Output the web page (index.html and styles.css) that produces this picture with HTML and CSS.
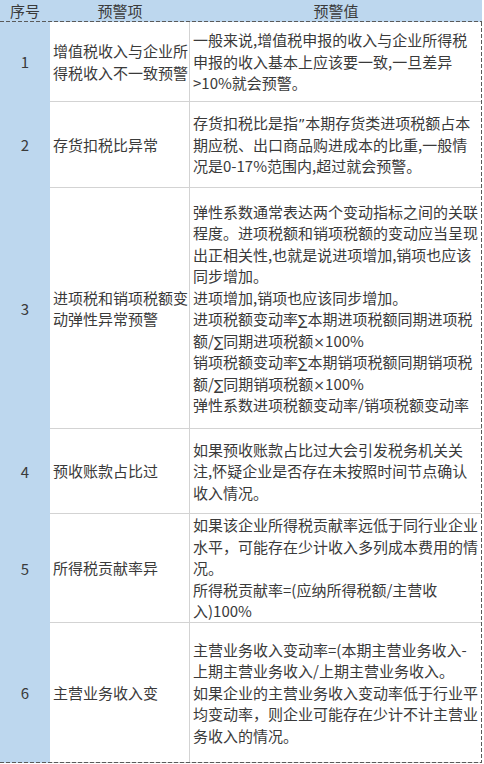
FILE: index.html
```html
<!DOCTYPE html>
<html lang="zh-CN">
<head>
<meta charset="utf-8">
<title>预警表</title>
<link rel="stylesheet" href="styles.css">
</head>
<body>
<div class="sheet">
  <div class="cell head no">序号</div>
  <div class="cell head item">预警项</div>
  <div class="cell head val">预警值</div>

  <div class="cell no r1">1</div>
  <div class="cell item">增值税收入与企业所得税收入不一致预警</div>
  <div class="cell val">一般来说,增值税申报的收入与企业所得税<br>申报的收入基本上应该要一致,一旦差异<br>&gt;10%就会预警。</div>

  <div class="cell no r2">2</div>
  <div class="cell item">存货扣税比异常</div>
  <div class="cell val">存货扣税比是指<span class="sym">”</span>本期存货类进项税额占本<br>期应税、出口商品购进成本的比重,一般情<br>况是0-17%范围内,超过就会预警。</div>

  <div class="cell no r3">3</div>
  <div class="cell item">进项税和销项税额变动弹性异常预警</div>
  <div class="cell val">弹性系数通常表达两个变动指标之间的关联<br>程度。进项税额和销项税额的变动应当呈现<br>出正相关性,也就是说进项增加,销项也应该<br>同步增加。<br>进项增加,销项也应该同步增加。<br>进项税额变动率<span class="sym">∑</span>本期进项税额同期进项税<br>额/<span class="sym">∑</span>同期进项税额<span class="sym">×</span>100%<br>销项税额变动率<span class="sym">∑</span>本期销项税额同期销项税<br>额/<span class="sym">∑</span>同期销项税额<span class="sym">×</span>100%<br>弹性系数进项税额变动率/销项税额变动率</div>

  <div class="cell no r4">4</div>
  <div class="cell item">预收账款占比过</div>
  <div class="cell val">如果预收账款占比过大会引发税务机关关<br>注,怀疑企业是否存在未按照时间节点确认<br>收入情况。</div>

  <div class="cell no r5">5</div>
  <div class="cell item">所得税贡献率异</div>
  <div class="cell val">如果该企业所得税贡献率远低于同行业企业<br>水平，可能存在少计收入多列成本费用的情<br>况。<br>所得税贡献率=(应纳所得税额/主营收<br>入)100%</div>

  <div class="cell no r6">6</div>
  <div class="cell item">主营业务收入变</div>
  <div class="cell val">主营业务收入变动率=(本期主营业务收入-<br>上期主营业务收入/上期主营业务收入。<br>如果企业的主营业务收入变动率低于行业平<br>均变动率，则企业可能存在少计不计主营业<br>务收入的情况。</div>
</div>
</body>
</html>
```

FILE: styles.css
```css
html, body {
  margin: 0;
  padding: 0;
  background: #ffffff;
}

body {
  font-family: "Noto Sans CJK SC", "Noto Sans", sans-serif;
  font-size: 15px;
  color: #3a3a3a;
}

.sheet {
  position: relative;
  width: 482px;
  display: grid;
  grid-template-columns: 50px 140px 292px;
  grid-template-rows: 22px 80px 86px 241px 85px 109px 140px;
}

.sheet::after {
  content: "";
  position: absolute;
  inset: 0;
  pointer-events: none;
  background:
    repeating-linear-gradient(90deg, #5a5a5a 0 4px, transparent 4px 6px) left 21px / 100% 1px no-repeat,
    repeating-linear-gradient(90deg, #5a5a5a 0 4px, transparent 4px 6px) left bottom / 100% 1px no-repeat,
    repeating-linear-gradient(180deg, #5a5a5a 0 4px, transparent 4px 6px) right 22px / 1px calc(100% - 22px) no-repeat;
}

.cell {
  box-sizing: border-box;
  display: flex;
  align-items: center;
  line-height: 21.5px;
  overflow: hidden;
}

.head {
  background: #bdd7ee;
  justify-content: center;
  line-height: 21px;
  padding-bottom: 1px;
}

.no {
  background: #bdd7ee;
  justify-content: center;
}

.item {
  padding: 0 1px 0 3px;
  border-right: 1px solid #d3d3d3;
  border-bottom: 1px solid #d3d3d3;
}

.val {
  display: block;
  padding: 0 3px 0 3px;
  white-space: nowrap;
  border-bottom: 1px solid #d3d3d3;
  align-content: center;
}

.sym {
  font-family: "DejaVu Sans", "Liberation Sans", sans-serif;
  font-size: 14px;
  line-height: 0;
}

.head.item,
.head.val {
  border: none;
  padding: 0 0 1px 0;
  display: flex;
}
```
